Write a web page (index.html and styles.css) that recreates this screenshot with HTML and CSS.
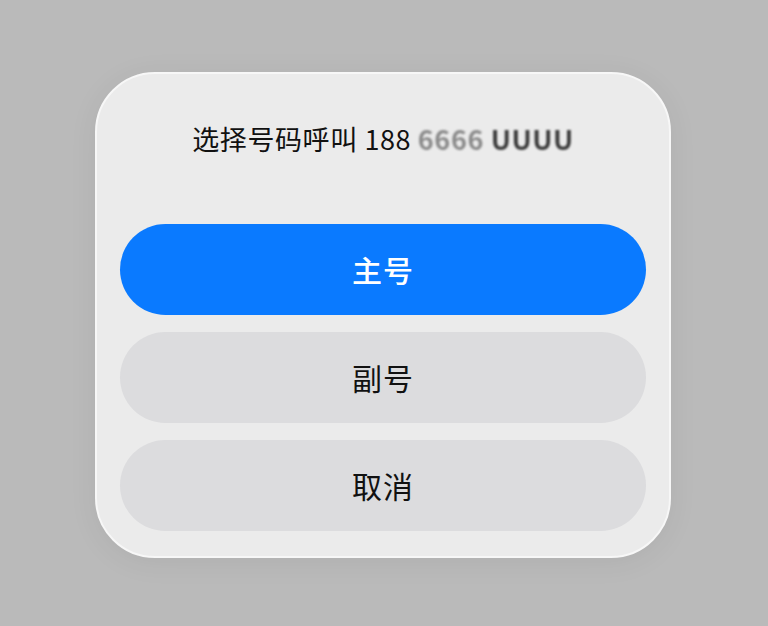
FILE: index.html
```html
<!DOCTYPE html>
<html lang="zh-CN">
<head>
<meta charset="utf-8">
<title>选择号码</title>
<link rel="stylesheet" href="styles.css">
</head>
<body>
<div class="screen">
  <div class="dialog">
    <div class="title"><span class="title-text">选择号码呼叫 188 <span class="masked light">6666</span> <span class="masked dark">UUUU</span></span></div>
    <div class="actions">
      <button class="btn primary">主号</button>
      <button class="btn">副号</button>
      <button class="btn">取消</button>
    </div>
  </div>
</div>
</body>
</html>
```
FILE: styles.css
```css
html, body {
  margin: 0;
  padding: 0;
  background: #bababa;
}
.screen {
  width: 768px;
  height: 626px;
  padding: 72px 0 0 95px;
  box-sizing: border-box;
}
.dialog {
  width: 576px;
  height: 486px;
  box-sizing: border-box;
  background: #ebebeb;
  border: 2px solid #f7f7f7;
  border-radius: 60px;
  box-shadow: 0 4px 30px rgba(0, 0, 0, 0.06);
  padding: 0 23px 24px;
  display: flex;
  flex-direction: column;
  font-family: "Noto Sans CJK SC", "Noto Sans", sans-serif;
}
.title {
  height: 150px;
  display: flex;
  align-items: center;
  justify-content: center;
  padding-bottom: 22px;
  box-sizing: border-box;
  font-size: 27px;
  color: #111;
  letter-spacing: 0.6px;
}
.title-text {
  white-space: nowrap;
}
.masked {
  filter: blur(1.3px);
  font-weight: 700;
}
.masked.light {
  color: #8a8a8a;
}
.masked.dark {
  color: #3a3a3a;
}
.actions {
  display: flex;
  flex-direction: column;
  gap: 17px;
}
.btn {
  height: 91px;
  border: none;
  border-radius: 46px;
  background: #dcdcde;
  color: #111;
  font-family: "Noto Sans CJK SC", "Noto Sans", sans-serif;
  font-size: 30px;
  font-weight: 400;
  padding: 0 0 2px;
  letter-spacing: 1px;
}
.btn.primary {
  background: #0a7aff;
  color: #fff;
  font-weight: 500;
}
```
